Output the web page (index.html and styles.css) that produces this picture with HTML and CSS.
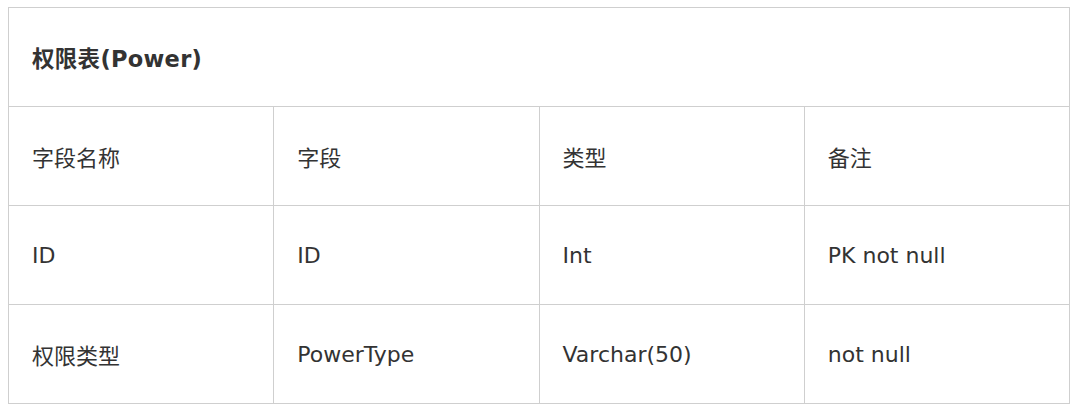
FILE: index.html
```html
<!DOCTYPE html>
<html lang="zh">
<head>
<meta charset="utf-8">
<title>权限表(Power)</title>
<link rel="stylesheet" href="styles.css">
</head>
<body>
<table class="schema">
  <colgroup>
    <col class="col"><col class="col"><col class="col"><col class="col">
  </colgroup>
  <tr>
    <th class="title" colspan="4">权限表(Power)</th>
  </tr>
  <tr>
    <td>字段名称</td>
    <td>字段</td>
    <td>类型</td>
    <td>备注</td>
  </tr>
  <tr>
    <td>ID</td>
    <td>ID</td>
    <td>Int</td>
    <td>PK not null</td>
  </tr>
  <tr>
    <td>权限类型</td>
    <td>PowerType</td>
    <td>Varchar(50)</td>
    <td>not null</td>
  </tr>
</table>
</body>
</html>
```

FILE: styles.css
```css
html, body {
  margin: 0;
  padding: 0;
  background: #ffffff;
}

body {
  padding: 7px 0 0 8px;
  font-family: "DejaVu Sans", "Noto Sans CJK SC", sans-serif;
  color: #333333;
}

.schema {
  border-collapse: collapse;
  table-layout: fixed;
  width: 1062px;
}

.col {
  width: 25%;
}

.schema th,
.schema td {
  border: 1px solid #cfcfcf;
  padding: 0 0 0 23px;
  font-size: 22px;
  text-align: left;
  vertical-align: middle;
  box-sizing: border-box;
  height: 99px;
}

.schema .title {
  font-weight: bold;
  font-size: 22.5px;
  letter-spacing: 0.3px;
}
```
